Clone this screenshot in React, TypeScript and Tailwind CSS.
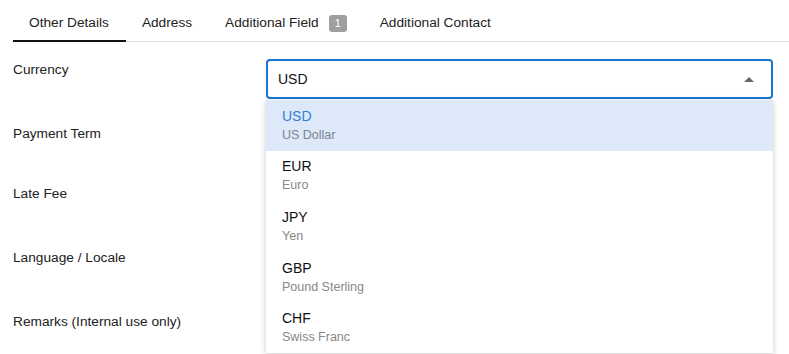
import React from 'react';

const tabs = [
  { label: 'Other Details', active: true },
  { label: 'Address' },
  { label: 'Additional Field', badge: '1' },
  { label: 'Additional Contact' },
];

const fields = ['Currency', 'Payment Term', 'Late Fee', 'Language / Locale', 'Remarks (Internal use only)'];

const currencies = [
  { code: 'USD', name: 'US Dollar' },
  { code: 'EUR', name: 'Euro' },
  { code: 'JPY', name: 'Yen' },
  { code: 'GBP', name: 'Pound Sterling' },
  { code: 'CHF', name: 'Swiss Franc' },
];

export default function App() {
  return (
    <div className="w-[789px] h-[354px] overflow-hidden bg-white text-[#222] font-['Liberation_Sans',Arial,sans-serif]">
      {/* Tabs */}
      <div className="ml-[13px] flex h-[42px] border-b border-[#e0e0e0] text-[13.7px]">
        {tabs.map(tab => (
          <div
            key={tab.label}
            className={`flex items-center gap-[10px] pl-4 pr-[17px] pt-[6px] ${tab.active ? 'border-b-2 border-[#111] -mb-px' : ''}`}
          >
            <span>{tab.label}</span>
            {tab.badge && (
              <span className="flex h-[17px] w-[18px] items-center justify-center rounded-[3px] bg-[#9e9e9e] text-[11px] text-white">
                {tab.badge}
              </span>
            )}
          </div>
        ))}
      </div>

      <div className="relative flex">
        {/* Labels */}
        <div className="w-[266px] shrink-0 pl-[13px] pt-[18px] text-[13.7px]">
          {fields.map((f, i) => (
            <div key={f} className={i === 1 ? 'h-[60px]' : 'h-[64px]'}>
              {f}
            </div>
          ))}
        </div>

        {/* Currency select */}
        <div className="pt-[17px]">
          <div className="flex h-[40px] w-[507px] items-center justify-between rounded-[4px] border-2 border-[#1976d2] pl-[10px] pr-[17px] text-[14px] text-[#111]">
            <span>USD</span>
            <svg width="10" height="5" viewBox="0 0 10 5">
              <path d="M0 5 L5 0 L10 5 Z" fill="#666" />
            </svg>
          </div>
        </div>

        {/* Dropdown menu */}
        <div className="absolute left-[266px] top-[58px] w-[507px] bg-white shadow-[0_2px_6px_rgba(0,0,0,0.22)]">
          {currencies.map((c, i) => (
            <div
              key={c.code}
              className={`flex h-[50.6px] flex-col justify-center pl-[16px] ${i === 0 ? 'bg-[#dde9f8]' : ''}`}
            >
              <span className={`text-[14px] leading-[17px] ${i === 0 ? 'text-[#2c7fd3]' : 'text-[#111]'}`}>{c.code}</span>
              <span className={`mt-[2px] text-[12.5px] leading-[16px] ${i === 0 ? 'text-[#7b8590]' : 'text-[#888]'}`}>{c.name}</span>
            </div>
          ))}
        </div>
      </div>
    </div>
  );
}
